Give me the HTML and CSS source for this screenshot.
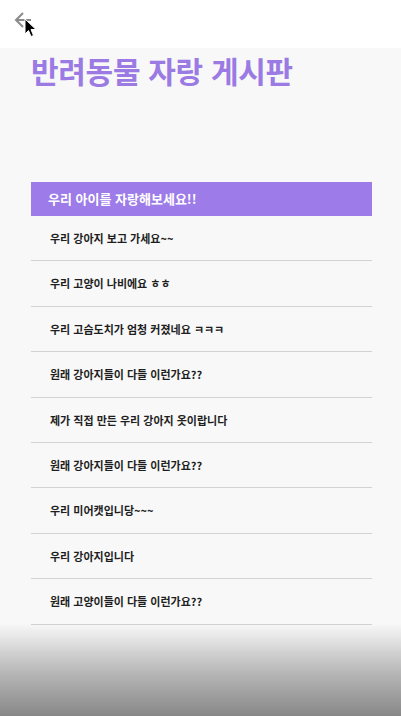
FILE: index.html
```html
<!DOCTYPE html>
<html lang="ko">
<head>
<meta charset="utf-8">
<link rel="stylesheet" href="styles.css">
</head>
<body>
<header class="topbar">
  <button class="back" aria-label="뒤로">
    <svg width="20" height="20" viewBox="0 0 20 20">
      <path d="M10 3 L3 10 L10 17 M3 10 H18" fill="none" stroke="#8a8a8a" stroke-width="2"/>
    </svg>
  </button>
  <svg class="cursor" width="14" height="20" viewBox="0 0 14 20">
    <path d="M1 1 L1 16 L4.5 12.5 L7 18.5 L9.5 17.5 L7 11.5 L12 11.5 Z" fill="#000" stroke="#fff" stroke-width="1"/>
  </svg>
</header>
<main class="page">
  <h1 class="title">반려동물 자랑 게시판</h1>
  <section class="board">
    <div class="board-head">우리 아이를 자랑해보세요!!</div>
    <ul class="posts">
      <li>우리 강아지 보고 가세요~~</li>
      <li>우리 고양이 나비에요 ㅎㅎ</li>
      <li>우리 고슴도치가 엄청 커졌네요 ㅋㅋㅋ</li>
      <li>원래 강아지들이 다들 이런가요??</li>
      <li>제가 직접 만든 우리 강아지 옷이랍니다</li>
      <li>원래 강아지들이 다들 이런가요??</li>
      <li>우리 미어캣입니당~~~</li>
      <li>우리 강아지입니다</li>
      <li>원래 고양이들이 다들 이런가요??</li>
    </ul>
  </section>
</main>
<div class="fade"></div>
</body>
</html>
```
FILE: styles.css
```css
html, body {
  margin: 0;
  padding: 0;
  background: #f8f8f8;
  font-family: "Noto Sans CJK KR", "Noto Sans", sans-serif;
}
.topbar {
  position: relative;
  height: 48px;
  background: #ffffff;
  display: flex;
  align-items: flex-start;
}
.back {
  margin: 10px 0 0 13px;
  padding: 0;
  border: 0;
  background: none;
  width: 20px;
  height: 20px;
}
.cursor {
  position: absolute;
  left: 24px;
  top: 18px;
}
.page {
  padding: 0 29px 0 31px;
}
.title {
  margin: 0;
  padding-top: 2px;
  height: 134px;
  box-sizing: border-box;
  font-size: 30px;
  line-height: 40px;
  font-weight: 700;
  color: #9b7be3;
  letter-spacing: -0.3px;
}
.board-head {
  height: 34px;
  line-height: 34px;
  background: #9d7be8;
  color: #ffffff;
  font-size: 13px;
  font-weight: 700;
  padding-left: 17px;
}
.posts {
  list-style: none;
  margin: 0;
  padding: 0;
}
.posts li {
  height: 44.4px;
  line-height: 44.4px;
  border-bottom: 1px solid #d2d2d2;
  padding-left: 19px;
  font-size: 11px;
  font-weight: 700;
  color: #1e1e1e;
}
.fade {
  position: fixed;
  left: 0;
  right: 0;
  bottom: 0;
  height: 92px;
  background: linear-gradient(to bottom, rgba(135,135,135,0) 0%, rgba(135,135,135,0.55) 50%, rgba(135,135,135,1) 100%);
  pointer-events: none;
}
```
